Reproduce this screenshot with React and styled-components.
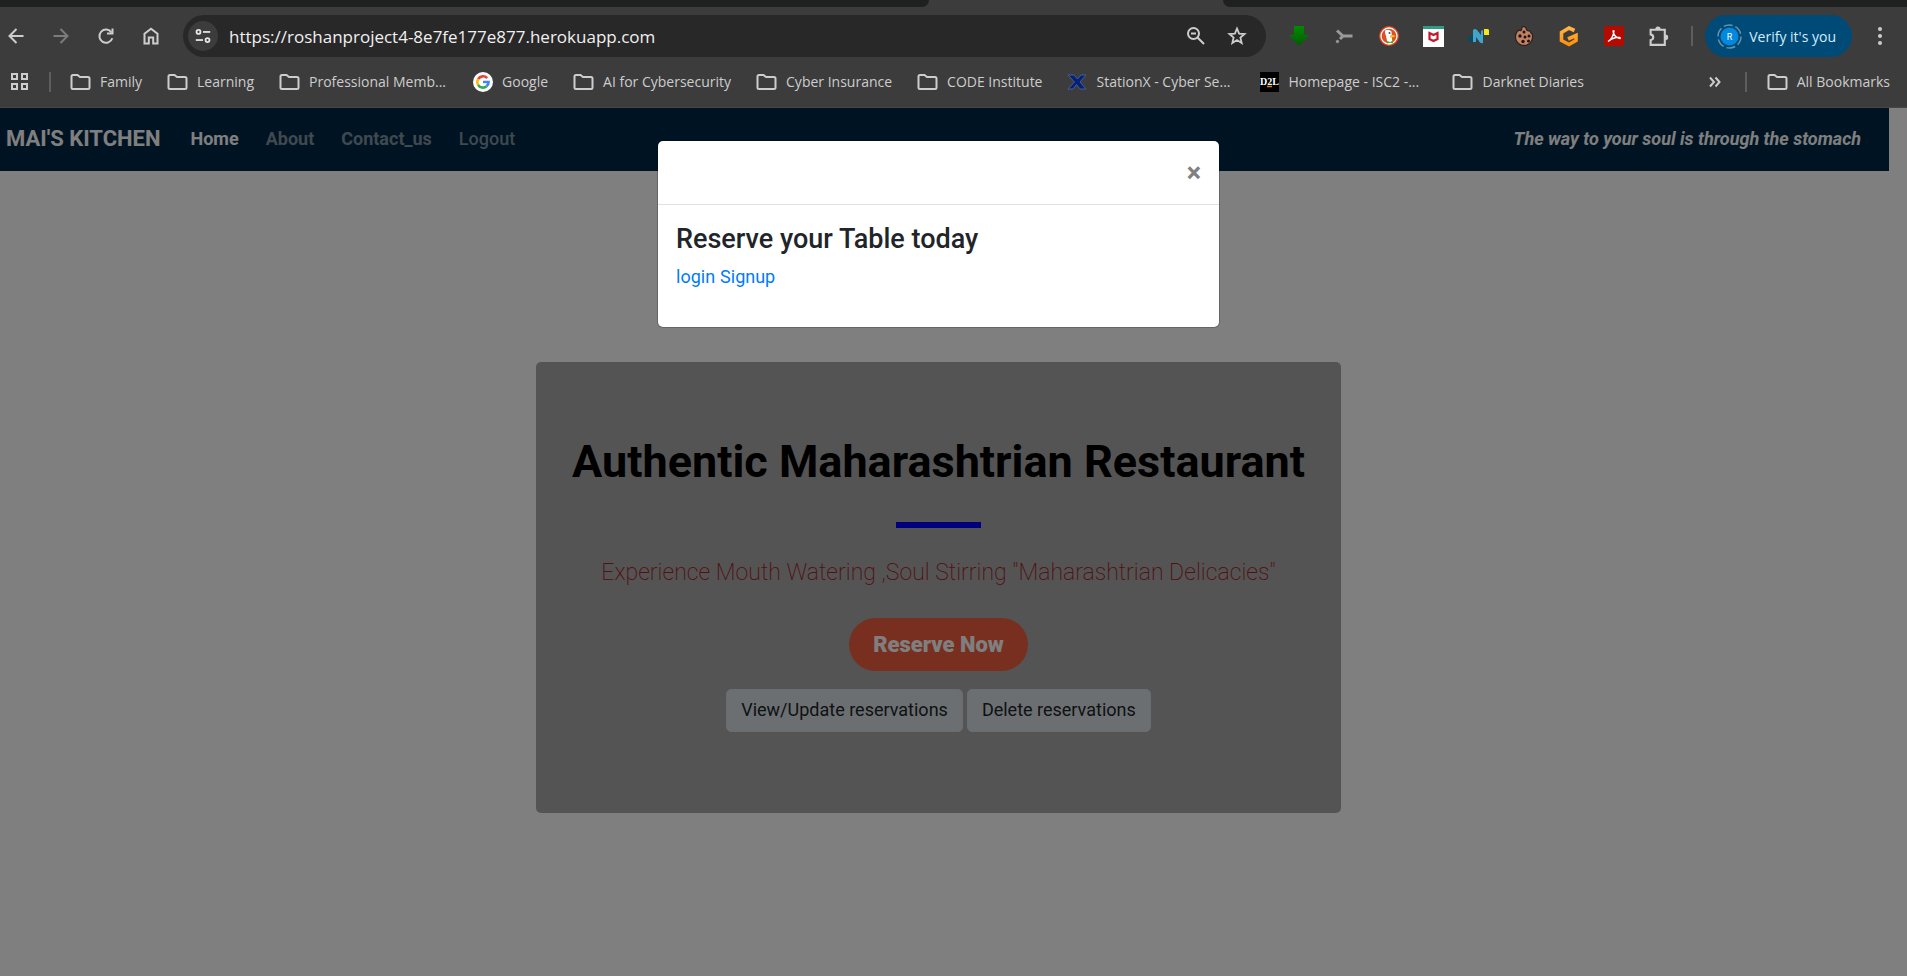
import React from "react";
import styled, { createGlobalStyle } from "styled-components";

const GlobalStyle = createGlobalStyle`
  * { box-sizing: border-box; }
  html, body, #root { height: 100%; }
  body { margin: 0; background: #fff; font-family: Roboto, "Liberation Sans", sans-serif; }
  button { font: inherit; border: 0; background: none; padding: 0; cursor: pointer; }
  a { text-decoration: none; }
  svg { display: block; flex: none; }
`;

const Window = styled.div`
  display: flex;
  flex-direction: column;
  min-height: 100%;
`;

/* Browser chrome */
const Chrome = styled.header`
  background: #3c3c3c;
  color: #cdcdcd;
  font-family: "Open Sans", "Noto Sans", sans-serif;
  font-size: 14px;
`;
const TabStrip = styled.div`
  display: flex;
  height: 7px;
  overflow: hidden;
`;
const InactiveTabs = styled.div`
  flex: ${(p) => p.$grow};
  background: #1f2120;
  border-radius: ${(p) => (p.$side === "left" ? "0 0 14px 0" : "0 0 0 14px")};
`;
const ActiveTab = styled.div`
  width: 294px;
`;
const Toolbar = styled.div`
  display: flex;
  align-items: center;
  height: 58px;
  padding-left: 3px;
`;
const IconButton = styled.button`
  width: ${(p) => p.$w || 45}px;
  height: 32px;
  display: flex;
  align-items: center;
  justify-content: center;
  color: ${(p) => (p.$dim ? "#7c7c7c" : "#cdcdcd")};
  flex: none;
`;
const NavButtons = styled.div`
  display: flex;
  width: 180px;
  margin-left: -10px;
  flex: none;
`;
const Omnibox = styled.div`
  flex: 1;
  min-width: 0;
  display: flex;
  align-items: center;
  height: 42px;
  margin-left: 10px;
  padding: 0 9px 0 5px;
  border-radius: 21px;
  background: #282828;
`;
const SiteInfo = styled.button`
  width: 30px;
  height: 30px;
  border-radius: 50%;
  background: #3c3c3c;
  color: #e3e3e3;
  display: flex;
  align-items: center;
  justify-content: center;
  flex: none;
`;
const Address = styled.input`
  flex: 1;
  min-width: 0;
  margin-left: 11px;
  padding: 0;
  border: 0;
  outline: 0;
  background: none;
  color: #f0f0f0;
  font-family: "Open Sans", "Noto Sans", sans-serif;
  font-size: 17px;
`;
const Extensions = styled.div`
  display: flex;
  margin-left: 10px;
`;
const Divider = styled.span`
  width: 2px;
  height: 20px;
  background: #5e5e5e;
  flex: none;
`;
const Profile = styled.button`
  display: flex;
  align-items: center;
  gap: 7px;
  height: 42px;
  margin-left: 2px;
  padding: 0 16px 0 12px;
  border-radius: 21px;
  background: #004a77;
  color: #d3ecff;
  white-space: nowrap;
`;
const Bookmarks = styled.nav`
  display: flex;
  align-items: center;
  height: 43px;
  padding: 0 17px 9px 10px;
  border-bottom: 1px solid #474747;
`;
const BookmarkList = styled.div`
  display: flex;
  flex: 1;
  gap: 25px;
`;
const Bookmark = styled.a`
  display: flex;
  align-items: center;
  gap: 9px;
  color: #cdcdcd;
  white-space: nowrap;
`;
const BookmarkLabel = styled.span`
  min-width: ${(p) => (p.$truncated ? 139 : 0)}px;
`;

/* Site */
const Page = styled.div`
  position: relative;
  flex: 1;
  background: #fff;
`;
const SiteNav = styled.nav`
  display: flex;
  align-items: center;
  height: 63px;
  margin-right: 18px;
  padding: 0 28px 2px 6px;
  background: #002644;
  color: #fff;
  font-size: 18px;
`;
const Brand = styled.a`
  color: #fff;
  font-size: 22px;
  font-weight: 700;
  margin-right: 30px;
`;
const NavLinks = styled.div`
  display: flex;
  flex: 1;
  gap: 27px;
`;
const NavLink = styled.a`
  color: ${(p) => (p.$active ? "#fff" : "rgba(255, 255, 255, 0.5)")};
  font-weight: ${(p) => p.$weight || 700};
`;
const Tagline = styled.em`
  font-weight: 700;
`;
const Main = styled.main`
  display: flex;
  justify-content: center;
  margin-right: 30px;
  padding-top: 191px;
`;
const Hero = styled.section`
  display: flex;
  flex-direction: column;
  align-items: center;
  padding: 73px 36px 81px;
  border-radius: 5px;
  background: #a8a8a8;
`;
const Title = styled.h1`
  margin: 0;
  color: #000;
  font-size: 45px;
  line-height: 54px;
  font-weight: 700;
`;
const Rule = styled.hr`
  width: 85px;
  height: 6px;
  margin: 33px 0 27px;
  border: 0;
  background: #00f;
`;
const Lead = styled.p`
  margin: 0 0 27px;
  color: #a52024;
  font-size: 23px;
  line-height: 36px;
  font-weight: 200;
`;
const ReserveButton = styled.button`
  height: 53px;
  padding: 0 24px;
  border-radius: 27px;
  background: #f05f40;
  color: #fff;
  font-size: 22px;
  font-weight: 900;
`;
const Actions = styled.div`
  display: flex;
  gap: 4px;
  margin-top: 18px;
`;
const ActionButton = styled.button`
  height: 43px;
  padding: 0 14px 2px;
  border: 1px solid #d4dbe1;
  border-radius: 5px;
  background: #d8dfe4;
  color: #212529;
  font-size: 18px;
`;
const Backdrop = styled.div`
  position: absolute;
  inset: 0;
  display: flex;
  justify-content: center;
  align-items: flex-start;
  padding: 33px 30px 0 0;
  background: rgba(0, 0, 0, 0.5);
`;
const Dialog = styled.div`
  width: 561px;
  border-radius: 5px;
  background: #fff;
  box-shadow: 0 0 0 1px rgba(0, 0, 0, 0.2);
`;
const DialogHeader = styled.div`
  display: flex;
  justify-content: flex-end;
  height: 64px;
  padding: 18px;
  border-bottom: 1px solid #dee2e6;
`;
const CloseButton = styled.button`
  display: flex;
  align-items: center;
  height: 28px;
  color: #808080;
  font-size: 27px;
  font-weight: 700;
`;
const DialogBody = styled.div`
  padding: 18px 18px 37px;
`;
const DialogTitle = styled.h4`
  margin: 0 0 8px;
  color: #212529;
  font-size: 27px;
  line-height: 32px;
  font-weight: 500;
`;
const DialogLinks = styled.div`
  display: flex;
  gap: 5px;
  font-size: 18px;
  line-height: 27px;
`;
const DialogLink = styled.a`
  color: #007bff;
`;

const Stroke = ({ size = 20, w = 2, children, ...rest }) => (
  <svg width={size} height={size} viewBox="0 0 20 20" fill="none" stroke="currentColor" strokeWidth={w} {...rest}>
    {children}
  </svg>
);
const Back = () => <Stroke><path d="M17.500 10H3.500M10.500 3L3.500 10L10.500 17" /></Stroke>;
const Forward = () => <Stroke><path d="M2.500 10H16.500M9.500 3L16.500 10L9.500 17" /></Stroke>;
const Reload = () => (
  <Stroke><path d="M16.300 12.200A6.600 6.600 0 1 1 15.500 6.500" /><path d="M16.500 2.500V7.500H11" /></Stroke>
);
const Home = () => <Stroke><path d="M3.500 17.500V7.800L10 2.700L16.500 7.800V17.500H12.200V11.500H7.800V17.500Z" /></Stroke>;
const Tune = () => (
  <Stroke size={18}><circle cx="5" cy="5.500" r="2.200" /><path d="M10 5.500H18" /><circle cx="15" cy="14.500" r="2.200" /><path d="M2 14.500H10" /></Stroke>
);
const ZoomOut = () => (
  <Stroke><circle cx="7.500" cy="7.500" r="5.500" /><path d="M5 7.500H10M11.500 11.500L18 18" /></Stroke>
);
const Star = () => (
  <Stroke w={1.8}><path d="M10 2.500L12.100 7.600L17.600 8L13.400 11.600L14.700 17L10 14.100L5.300 17L6.600 11.600L2.400 8L7.900 7.600Z" /></Stroke>
);
const Folder = () => (
  <svg width="21" height="18" viewBox="0 0 21 18" fill="none" stroke="#cdcdcd" strokeWidth="2">
    <path d="M1.500 3.500V14.500Q1.500 16 3 16H18Q19.500 16 19.500 14.500V5.500Q19.500 4 18 4H10L7.500 2H3Q1.500 2 1.500 3.500Z" />
  </svg>
);
const Apps = () => (
  <svg width="19" height="19" viewBox="0 0 19 19" fill="none" stroke="#cdcdcd" strokeWidth="2">
    <path d="M2 2h5v5h-5zM12 2h5v5h-5zM2 12h5v5h-5zM12 12h5v5h-5z" />
  </svg>
);
const GoogleIcon = () => (
  <svg width="20" height="20" viewBox="0 0 20 20" fill="none" strokeWidth="2.600">
    <circle cx="10" cy="10" r="10" fill="#fff" />
    <path d="M14.200 6.200A5.600 5.600 0 0 0 5.100 7.200" stroke="#ea4335" />
    <path d="M5.100 7.200A5.600 5.600 0 0 0 5.100 12.800" stroke="#fbbc05" />
    <path d="M5.100 12.800A5.600 5.600 0 0 0 13.600 14.300" stroke="#34a853" />
    <path d="M13.600 14.300A5.600 5.600 0 0 0 15.600 10H10" stroke="#4285f4" />
  </svg>
);
const StationIcon = () => (
  <svg width="20" height="16" viewBox="0 0 20 16">
    <path d="M1 1H7L10.500 5L14 1H19L13 8L19 15H13L9.500 10.500L6 15H1L7.500 8Z" fill="#04217a" stroke="#4a5f8c" />
  </svg>
);
const BrightspaceIcon = () => (
  <svg width="19" height="20" viewBox="0 0 19 20">
    <rect width="19" height="20" fill="#000" />
    <text x="0" y="13" fontFamily="Liberation Serif" fontWeight="700" fontSize="10" fill="#fff">D2L</text>
    <path d="M7 14.500H12" stroke="#e87511" strokeWidth="1.500" />
  </svg>
);
const ArrowDown = () => (
  <svg width="20" height="20" viewBox="0 0 20 20">
    <defs><linearGradient id="arrow" x2="0" y2="1"><stop stopColor="#028a02" /><stop offset="1" stopColor="#005c00" /></linearGradient></defs>
    <path d="M5 0H15V9H20L10 20L0 9H5Z" fill="url(#arrow)" />
  </svg>
);
const Splitter = () => (
  <svg width="20" height="20" viewBox="0 0 20 20" fill="none" stroke="#9a9a9a" strokeWidth="3">
    <path d="M18.500 10H9L3 4.500M9 10L6 13" /><circle cx="3.500" cy="15.500" r="1.200" fill="#9a9a9a" strokeWidth="1" />
  </svg>
);
const Duck = () => (
  <svg width="20" height="20" viewBox="0 0 20 20">
    <circle cx="10" cy="10" r="10" fill="#e5401d" /><circle cx="10" cy="10" r="8" fill="#de4f24" stroke="#fff" strokeWidth="1.300" />
    <path d="M6 4.500Q10 2.500 12.500 5.500L13 13L13.500 17Q10.500 18.500 8.500 17L7 10Q5.500 7 6 4.500Z" fill="#fff" />
    <path d="M11 9.500Q14 8.500 16.500 10Q14 12 11 11.500Z" fill="#fdc20a" />
    <path d="M8 15L11 16L14 14.500V17.500L11 16.800L8 17.500Z" fill="#3fae2a" /><circle cx="10.500" cy="7" r="1" fill="#2d4f8e" />
  </svg>
);
const Shield = () => (
  <svg width="21" height="21" viewBox="0 0 21 21">
    <rect width="21" height="21" fill="#fff" /><rect width="21" height="3" fill="#2b9c86" />
    <path d="M6.500 7L10.500 9L14.500 7V13L10.500 15L6.500 13Z" fill="none" stroke="#c01a2c" strokeWidth="2.200" />
  </svg>
);
const NordIcon = () => (
  <svg width="21" height="16" viewBox="0 0 21 16">
    <path d="M0 10Q0 8 3 8H6V14H0Z" fill="#084b5e" /><path d="M16 1H20L21 2V7H16Z" fill="#f5e51b" />
    <path d="M5 2Q7 0 9 2L13 7V3L15 2V15Q13 15.500 12 14.500L8 9V14H5Z" fill="#3ea6cd" />
  </svg>
);
const Cookie = () => (
  <svg width="20" height="20" viewBox="0 0 20 20">
    <path d="M8 1Q11 0 12 2Q12 5 16 5L17 7Q19 8 18.500 11A8.500 8.500 0 1 1 5 4Q8 6 8 1Z" fill="#c08263" stroke="#2a201c" strokeWidth="1.200" />
    <g fill="#1d1412"><circle cx="10" cy="6" r="1.500" /><circle cx="6" cy="10" r="1.700" /><circle cx="11" cy="11" r="1.500" /><circle cx="15" cy="10" r="1.500" /><circle cx="9" cy="15.500" r="1.700" /><circle cx="14.500" cy="15" r="1.500" /></g>
  </svg>
);
const GIcon = () => (
  <svg width="20" height="21" viewBox="0 0 20 21">
    <defs><linearGradient id="amber" gradientUnits="userSpaceOnUse" x1="0" y1="0" x2="0" y2="21"><stop stopColor="#ffb84d" /><stop offset="1" stopColor="#ff8c00" /></linearGradient></defs>
    <path d="M15.500 4.500L10 2L2.500 6.500V14.500L10 18.500L17 14.500V9.500L9 13" fill="none" stroke="url(#amber)" strokeWidth="3.600" />
  </svg>
);
const PdfIcon = () => (
  <svg width="20" height="20" viewBox="0 0 20 20" fill="none">
    <rect width="20" height="20" rx="2" fill="#b30b00" />
    <path d="M4 15.500Q9 12.500 10 5Q8.500 4 9.500 7Q11.500 12 16 12.500Q17 11 12 11.500Q7 12.500 4 15.500Z" stroke="#fff" strokeWidth="1.400" />
  </svg>
);
const Puzzle = () => (
  <Stroke size={21} w={2}>
    <path d="M2.500 3.500H16V18H2.500V13.500Q5 13 5 10.800Q5 8.500 2.500 8Z" />
    <path d="M7.500 3.500A2 2 0 0 1 11.500 3.500ZM16 8.700A2 2 0 0 1 16 12.700Z" fill="currentColor" stroke="none" />
    <path d="M8 3A1.500 1.500 0 0 1 11 3M16.500 9A1.500 1.500 0 0 1 16.500 12.500" />
  </Stroke>
);
const Avatar = () => (
  <svg width="25" height="25" viewBox="0 0 25 25">
    <circle cx="12.500" cy="12.500" r="11.500" fill="none" stroke="#6893ae" strokeWidth="1.500" strokeDasharray="9 3" />
    <circle cx="12.500" cy="12.500" r="9" fill="#0288dc" />
    <text x="12.500" y="16" textAnchor="middle" fontFamily="Roboto" fontSize="9" fill="#fff">R</text>
  </svg>
);
const Dots = () => (
  <svg width="4" height="18" viewBox="0 0 4 18" fill="#cdcdcd"><circle cx="2" cy="2" r="2" /><circle cx="2" cy="9" r="2" /><circle cx="2" cy="16" r="2" /></svg>
);
const Chevrons = () => (
  <svg width="12" height="12" viewBox="0 0 12 12" fill="none" stroke="#cdcdcd" strokeWidth="2"><path d="M1 1.500L5 6L1 10.500M6.500 1.500L10.500 6L6.500 10.500" /></svg>
);

const extensions = [
  ["Downloader", ArrowDown], ["Splitter", Splitter], ["DuckDuckGo", Duck], ["McAfee", Shield],
  ["NordPass", NordIcon], ["Cookies", Cookie], ["G", GIcon], ["Acrobat", PdfIcon], ["Extensions", Puzzle],
];
const bookmarks = [
  ["Family", Folder], ["Learning", Folder], ["Professional Memb...", Folder], ["Google", GoogleIcon],
  ["AI for Cybersecurity", Folder], ["Cyber Insurance", Folder], ["CODE Institute", Folder],
  ["StationX - Cyber Se...", StationIcon], ["Homepage - ISC2 -...", BrightspaceIcon], ["Darknet Diaries", Folder],
];

export default function App() {
  return (
    <Window>
      <GlobalStyle />
      <Chrome>
        <TabStrip>
          <InactiveTabs $side="left" $grow={929} />
          <ActiveTab />
          <InactiveTabs $side="right" $grow={684} />
        </TabStrip>
        <Toolbar>
          <NavButtons>
            <IconButton aria-label="Back"><Back /></IconButton>
            <IconButton aria-label="Forward" $dim><Forward /></IconButton>
            <IconButton aria-label="Reload"><Reload /></IconButton>
            <IconButton aria-label="Home"><Home /></IconButton>
          </NavButtons>
          <Omnibox>
            <SiteInfo aria-label="Site information"><Tune /></SiteInfo>
            <Address aria-label="Address" defaultValue="https://roshanproject4-8e7fe177e877.herokuapp.com" />
            <IconButton $w={41} aria-label="Zoom"><ZoomOut /></IconButton>
            <IconButton $w={41} aria-label="Bookmark this page"><Star /></IconButton>
          </Omnibox>
          <Extensions>
            {extensions.map(([name, Icon]) => (
              <IconButton key={name} aria-label={name}><Icon /></IconButton>
            ))}
          </Extensions>
          <IconButton as="span" $w={22}><Divider /></IconButton>
          <Profile><Avatar />Verify it's you</Profile>
          <IconButton $w={55} aria-label="Menu"><Dots /></IconButton>
        </Toolbar>
        <Bookmarks aria-label="Bookmarks">
          <Apps />
          <IconButton as="span" $w={41}><Divider /></IconButton>
          <BookmarkList>
            {bookmarks.map(([name, Icon]) => (
              <Bookmark key={name} href="#">
                <Icon />
                <BookmarkLabel $truncated={name.endsWith("...")}>{name}</BookmarkLabel>
              </Bookmark>
            ))}
          </BookmarkList>
          <IconButton $w={22} aria-label="More bookmarks"><Chevrons /></IconButton>
          <IconButton as="span" $w={41}><Divider /></IconButton>
          <Bookmark href="#"><Folder />All Bookmarks</Bookmark>
        </Bookmarks>
      </Chrome>
      <Page>
        <SiteNav aria-label="Site">
          <Brand href="#">MAI'S KITCHEN</Brand>
          <NavLinks>
            <NavLink href="#" $active>Home</NavLink>
            <NavLink href="#">About</NavLink>
            <NavLink href="#">Contact_us</NavLink>
            <NavLink href="#" $weight={500}>Logout</NavLink>
          </NavLinks>
          <Tagline>The way to your soul is through the stomach</Tagline>
        </SiteNav>
        <Main>
          <Hero>
            <Title>Authentic Maharashtrian Restaurant</Title>
            <Rule />
            <Lead>Experience Mouth Watering ,Soul Stirring "Maharashtrian Delicacies"</Lead>
            <ReserveButton>Reserve Now</ReserveButton>
            <Actions>
              <ActionButton>View/Update reservations</ActionButton>
              <ActionButton>Delete reservations</ActionButton>
            </Actions>
          </Hero>
        </Main>
        <Backdrop>
          <Dialog role="dialog" aria-modal="true" aria-labelledby="reserve-title">
            <DialogHeader><CloseButton aria-label="Close">×</CloseButton></DialogHeader>
            <DialogBody>
              <DialogTitle id="reserve-title">Reserve your Table today</DialogTitle>
              <DialogLinks><DialogLink href="#">login</DialogLink><DialogLink href="#">Signup</DialogLink></DialogLinks>
            </DialogBody>
          </Dialog>
        </Backdrop>
      </Page>
    </Window>
  );
}
